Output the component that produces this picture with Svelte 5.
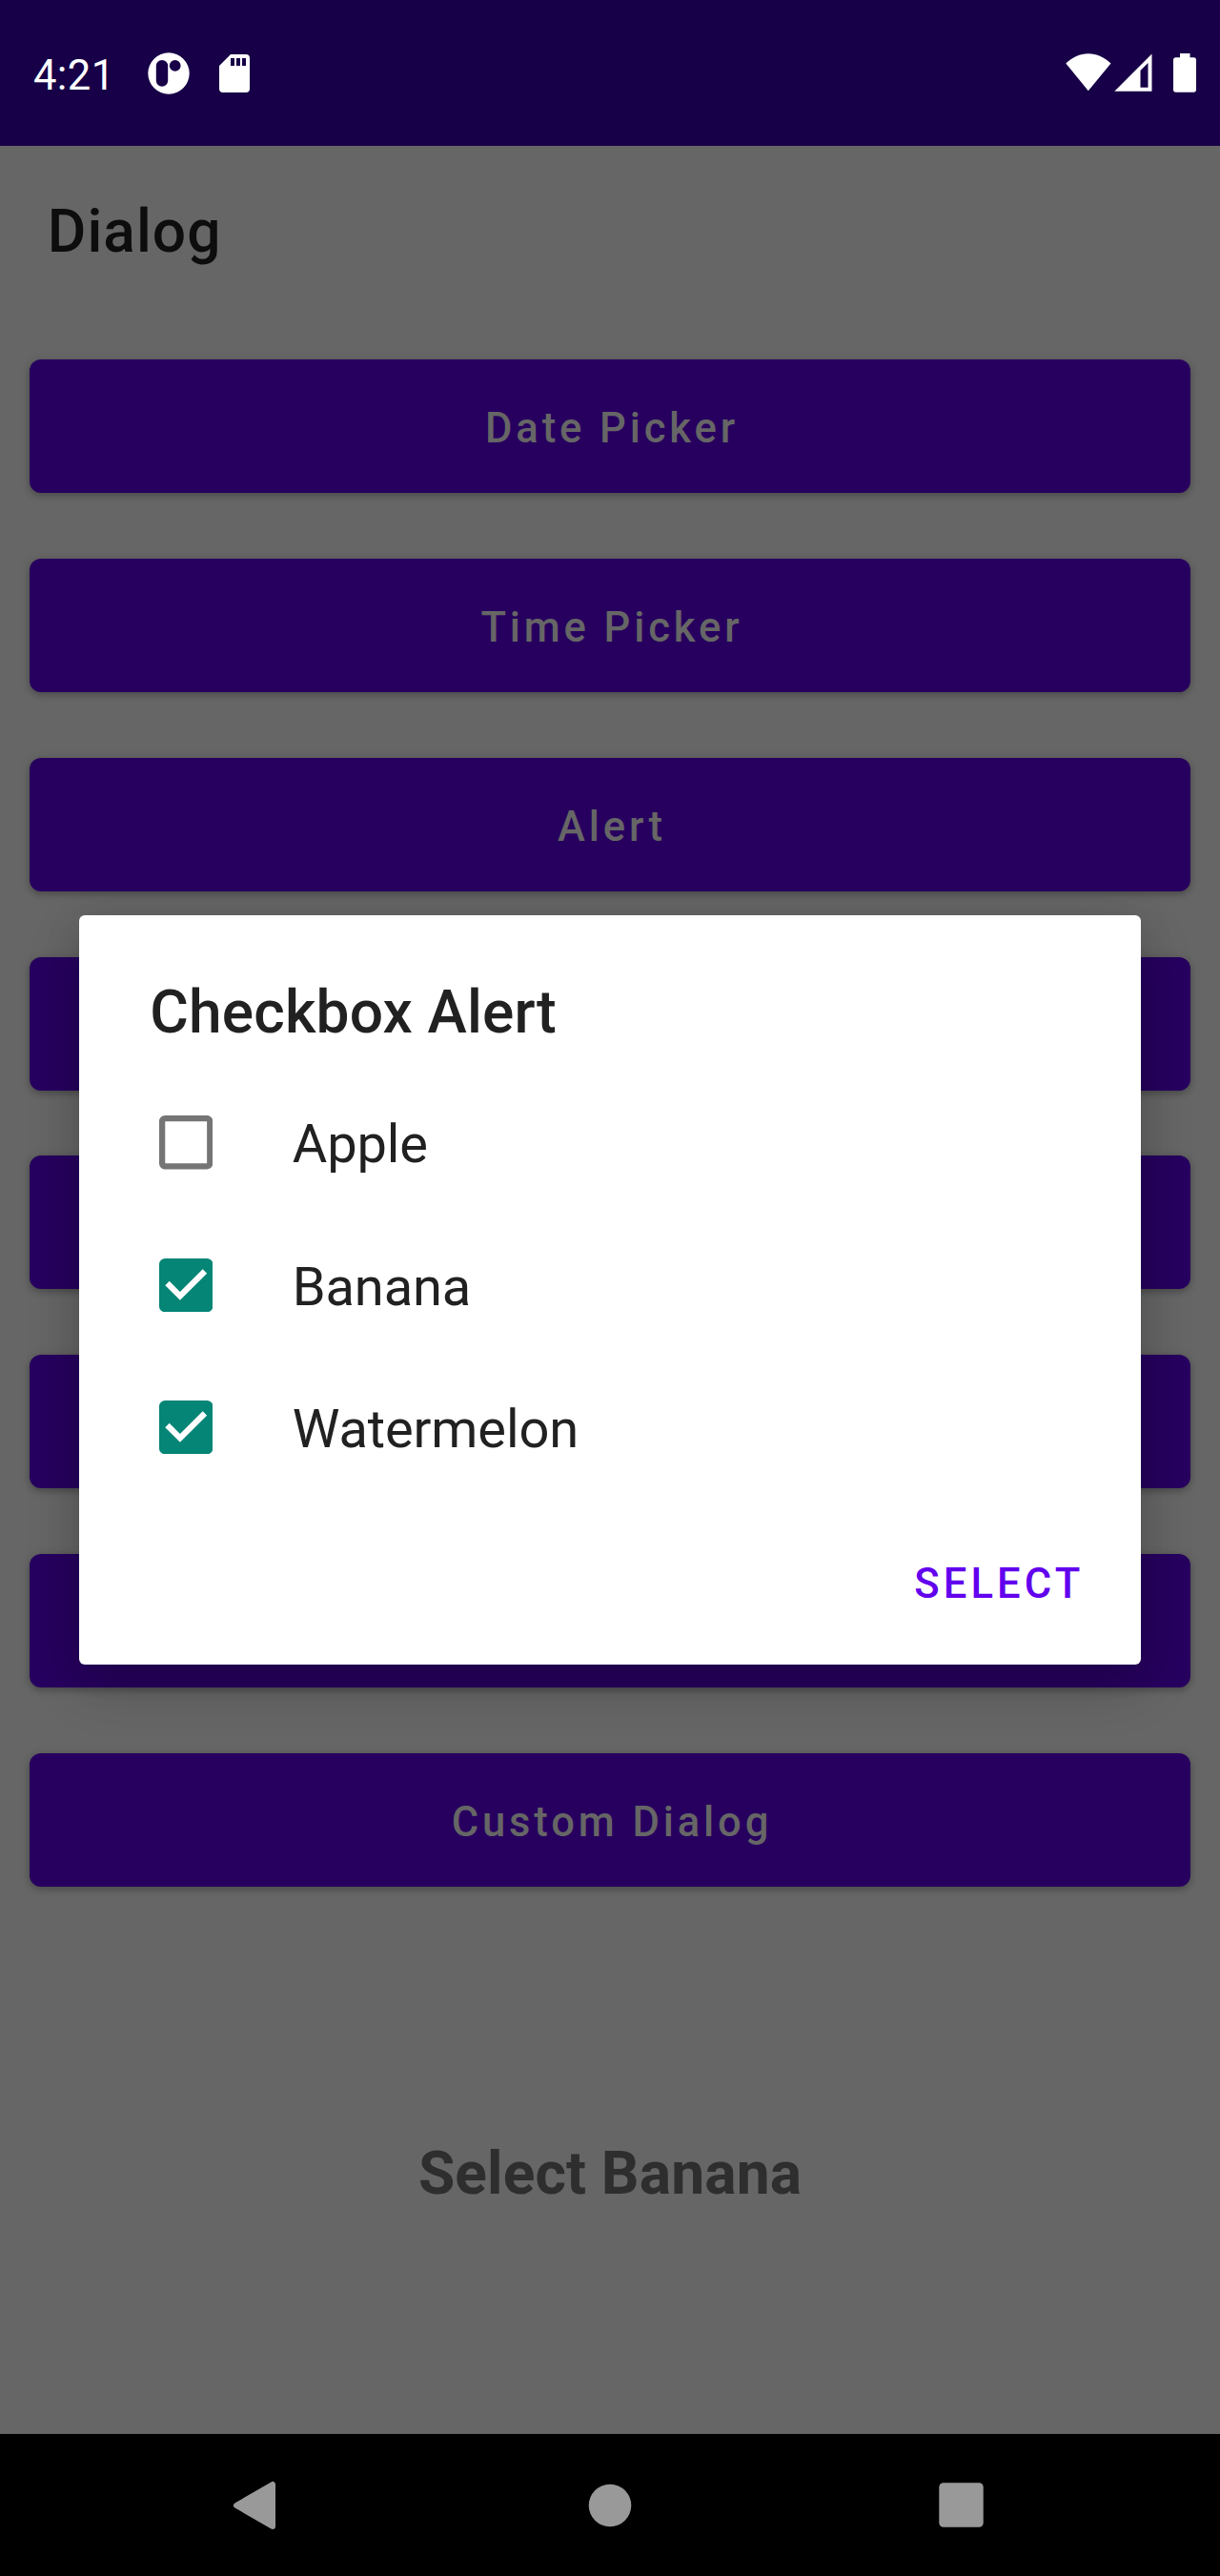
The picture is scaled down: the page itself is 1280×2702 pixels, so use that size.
<script>
  // Buttons fully behind the dialog carry no visible label.
  const actions = ['Date Picker', 'Time Picker', 'Alert', '', '', '', '', 'Custom Dialog'];

  let fruits = $state([
    { name: 'Apple', checked: false },
    { name: 'Banana', checked: true },
    { name: 'Watermelon', checked: true }
  ]);
</script>

<div class="screen">
  <header class="status">
    <span class="time">4:21</span>
    <svg class="app-icon" width="44" height="44" viewBox="0 0 44 44">
      <path
        fill="#fff"
        fill-rule="evenodd"
        d="M22 .3a21.7 21.7 0 1 1 0 43.4a21.7 21.7 0 0 1 0-43.4zM15 8a6.2 6.2 0 0 0-6.2 6.2v15.4a6.2 6.2 0 0 0 12.4 0V14.2A6.2 6.2 0 0 0 15 8zM28.7 8a5.9 5.9 0 1 0 0 11.8a5.9 5.9 0 0 0 0-11.8z"
      />
    </svg>
    <svg class="sd-icon" width="32" height="40" viewBox="0 0 32 40">
      <path
        fill="#fff"
        fill-rule="evenodd"
        d="M12 0H28a4 4 0 0 1 4 4V36a4 4 0 0 1-4 4H4a4 4 0 0 1-4-4V12zM12 4v8h4V4zM18 4v8h4V4zM24 4v8h4V4z"
      />
    </svg>
    <div class="indicators">
      <svg width="48" height="40" viewBox="0 0 48 40">
        <path fill="#fff" d="M.3 10.6C7 4 15 .3 23.8 .3S40.7 4 47.5 10.6L23.8 39.3z" />
      </svg>
      <svg class="signal" width="40" height="40" viewBox="0 0 40 40">
        <path fill="#fff" fill-rule="evenodd" d="M39.5 .5V39.7H.3zM35.5 10L27.5 18V35.7H35.5z" />
      </svg>
      <svg class="battery" width="24" height="41" viewBox="0 0 24 41">
        <path
          fill="#fff"
          d="M7 0H17.5V4.300H21.3A2.700 2.700 0 0 1 24 7V38A2.700 2.700 0 0 1 21.300 40.700H2.700A2.700 2.700 0 0 1 0 38V7A2.700 2.700 0 0 1 2.700 4.300H7z"
        />
      </svg>
    </div>
  </header>

  <main class="page">
    <h1>Dialog</h1>
    <div class="actions">
      {#each actions as label}
        <button class="action">{label}</button>
      {/each}
    </div>
    <p class="result">Select Banana</p>
  </main>

  <nav class="nav">
    <svg class="back" width="46" height="52" viewBox="0 0 46 52">
      <path
        fill="#999"
        stroke="#999"
        stroke-width="6"
        stroke-linejoin="round"
        d="M4 26L42 4V48z"
      />
    </svg>
    <svg class="home" width="46" height="46" viewBox="0 0 46 46">
      <circle cx="23" cy="23" r="22.3" fill="#999" />
    </svg>
    <svg class="recent" width="47" height="47" viewBox="0 0 47 47">
      <rect x=".3" y=".3" width="46.4" height="46.4" rx="4.5" fill="#999" />
    </svg>
  </nav>

  <div class="overlay">
    <section class="dialog" role="dialog" aria-label="Checkbox Alert">
      <h2>Checkbox Alert</h2>
      {#each fruits as fruit}
        <button
          class="row"
          role="checkbox"
          aria-checked={fruit.checked}
          onclick={() => (fruit.checked = !fruit.checked)}
        >
          <svg width="56.4" height="56.4" viewBox="0 0 18 18">
            {#if fruit.checked}
              <rect width="18" height="18" rx="2" fill="#048576" />
              <path fill="#fff" d="M7 14L2 9l1.410-1.410L7 11.170l7.590-7.590L16 5z" />
            {:else}
              <path
                fill="#757575"
                d="M16 2v14H2V2h14m0-2H2C.9 0 0 .9 0 2v14c0 1.100.9 2 2 2h14c1.100 0 2-.9 2-2V2c0-1.100-.9-2-2-2z"
              />
            {/if}
          </svg>
          <span>{fruit.name}</span>
        </button>
      {/each}
      <footer>
        <button class="confirm">SELECT</button>
      </footer>
    </section>
  </div>
</div>

<style>
  :global(body) {
    margin: 0;
    background: #666;
  }

  .screen {
    position: relative;
    box-sizing: border-box;
    width: 1280px;
    height: 2702px;
    display: flex;
    flex-direction: column;
    overflow: hidden;
    background: #666;
    font-family: Roboto, 'Liberation Sans', sans-serif;
  }

  button {
    border: 0;
    padding: 0;
    margin: 0;
    background: none;
    font-family: inherit;
  }

  svg {
    display: block;
    flex: none;
  }

  .status {
    flex: none;
    box-sizing: border-box;
    height: 153px;
    padding: 1px 25px 0 35px;
    display: flex;
    align-items: center;
    background: #170047;
  }

  .time {
    width: 120.3px;
    padding-top: 6px;
    color: #fff;
    font-size: 43.56px;
    line-height: 52px;
    letter-spacing: 0.4px;
  }

  .sd-icon {
    margin-left: 30.5px;
  }

  .indicators {
    margin-left: auto;
    display: flex;
    align-items: flex-start;
    height: 42px;
  }

  .signal {
    margin-left: 3px;
  }

  .battery {
    margin-left: 22px;
  }

  .page {
    flex: 1;
    display: flex;
    flex-direction: column;
  }

  h1 {
    margin: 0;
    padding: 53px 0 0 49.8px;
    height: 171px;
    color: #0d0d0d;
    font-size: 62.22px;
    line-height: 74px;
    font-weight: 500;
    letter-spacing: 1.05px;
  }

  .actions {
    display: grid;
    grid-auto-rows: 140px;
    row-gap: 68.86px;
    padding: 0 31px;
  }

  .action {
    padding: 6px 0 0 3.9px;
    border-radius: 12px;
    background: #27005f;
    color: #666;
    font-size: 43.56px;
    line-height: 52px;
    font-weight: 500;
    letter-spacing: 3.89px;
    box-shadow:
      0 3px 6px rgba(0, 0, 0, 0.2),
      0 1px 12px rgba(0, 0, 0, 0.12);
  }

  .result {
    margin: 264px 0 0;
    text-align: center;
    color: #2e2e2e;
    font-size: 62.22px;
    line-height: 74px;
    font-weight: 700;
    letter-spacing: 0.15px;
  }

  .nav {
    flex: none;
    height: 149px;
    display: flex;
    align-items: center;
    background: #000;
  }

  .back {
    margin-left: 244px;
  }

  .home {
    margin-left: 327px;
  }

  .recent {
    margin-left: 322px;
  }

  .overlay {
    position: absolute;
    inset: 153px 0 149px;
    display: flex;
    align-items: center;
    justify-content: center;
  }

  .dialog {
    box-sizing: border-box;
    width: 1114.7px;
    height: 785.6px;
    border-radius: 6px;
    background: #fff;
    box-shadow:
      0 22px 56px rgba(0, 0, 0, 0.2),
      0 4px 40px rgba(0, 0, 0, 0.08);
  }

  h2 {
    margin: 0;
    box-sizing: border-box;
    height: 163.6px;
    padding: 64.5px 0 0 74.7px;
    color: #212121;
    font-size: 62.22px;
    line-height: 74px;
    font-weight: 500;
    letter-spacing: 0.15px;
  }

  .row {
    width: 100%;
    height: 149.33px;
    padding-left: 84.2px;
    display: flex;
    align-items: center;
    color: #212121;
    text-align: left;
  }

  .row span {
    margin-left: 83.5px;
    padding-top: 4px;
    font-size: 56px;
    line-height: 66px;
    letter-spacing: -0.12px;
  }

  footer {
    display: flex;
    justify-content: flex-end;
    padding: 64.3px 60px 0 0;
  }

  .confirm {
    color: #6200ee;
    font-size: 43.56px;
    line-height: 52px;
    font-weight: 500;
    letter-spacing: 4.1px;
  }
</style>
